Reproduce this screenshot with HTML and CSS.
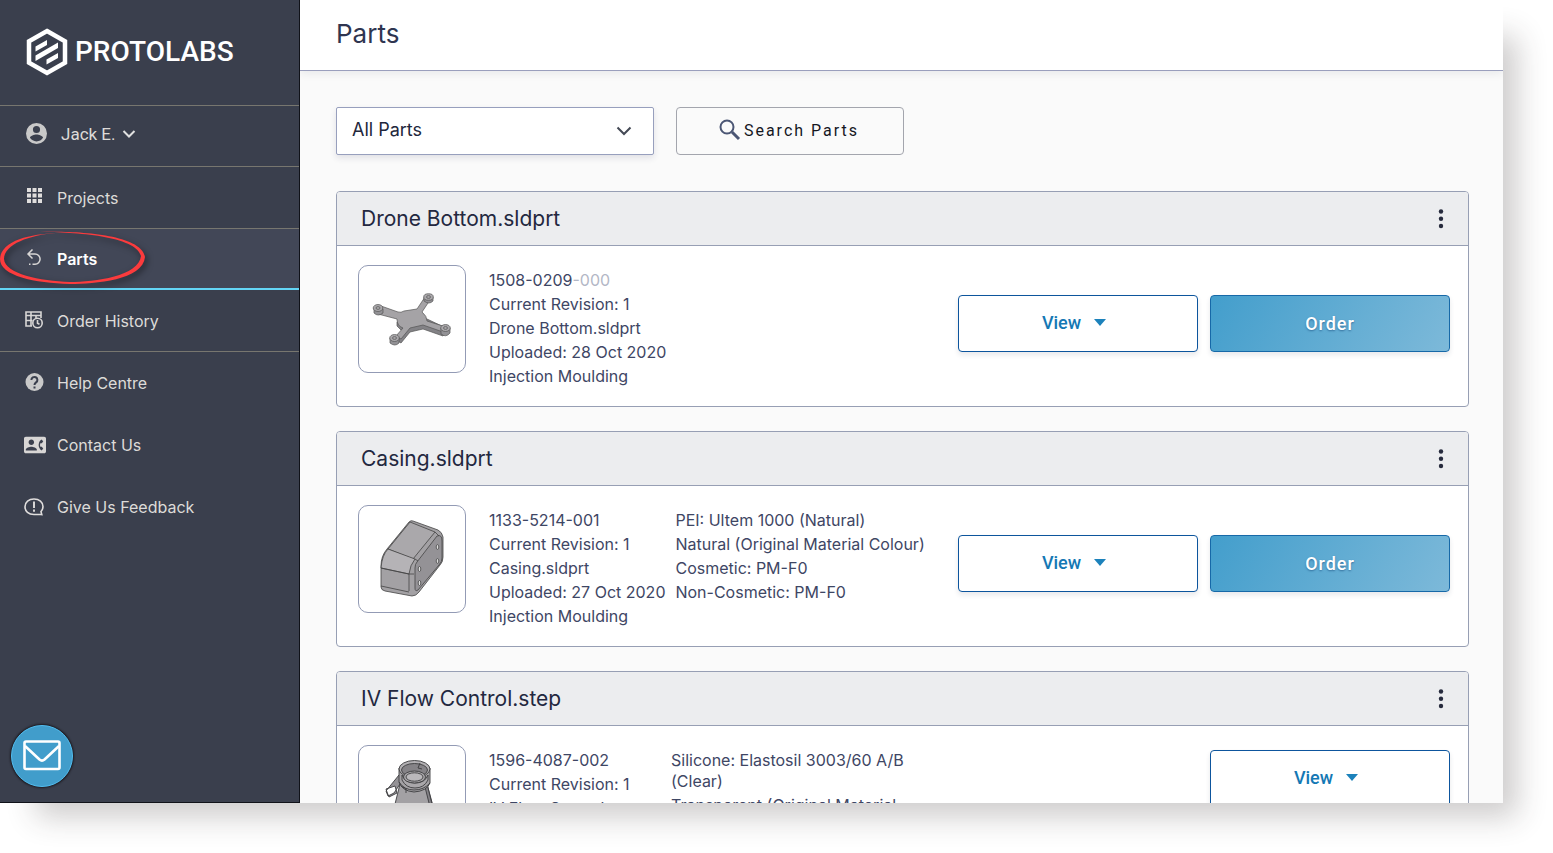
FILE: index.html
```html
<!DOCTYPE html>
<html lang="en">
<head>
<meta charset="utf-8">
<title>Parts</title>
<link rel="stylesheet" href="styles.css">
</head>
<body>
<div class="window">
  <nav class="sidebar">
    <a class="logo" href="#">
      <svg width="42" height="48" viewBox="0 0 42 48" fill="none"><path d="M21 3 39 13.200V34.800L21 45 3 34.800V13.200Z" stroke="#fff" stroke-width="4.500"/><path d="M9.500 18.500 21 12V17L9.500 23.500ZM9.500 27.500 32 14.500V20L9.500 33ZM20.500 31.500 32 25V30L20.500 36.500Z" fill="#fff"/></svg>
      <span>PROTOLABS</span>
    </a>
    <button class="user" type="button">
      <svg width="21" height="21" viewBox="2 2 20 20" fill="#c9c9c9"><path fill-rule="evenodd" d="M12 2a10 10 0 1 0 0 20 10 10 0 0 0 0-20Zm0 2.800a3.400 3.400 0 1 1 0 6.800 3.400 3.400 0 0 1 0-6.800Zm0 14.700c-2.600 0-4.900-1.300-6.200-3.400 0-2 4.100-3.200 6.200-3.200s6.200 1.200 6.200 3.200A7.400 7.400 0 0 1 12 19.500Z"/></svg>
      <span>Jack E.</span>
      <svg width="14" height="10" viewBox="0 0 14 10" fill="none" stroke="#e0e0e0" stroke-width="2"><path d="M1.500 2 7 7.500 12.500 2"/></svg>
    </button>
    <a class="item" href="#">
      <svg width="22" height="20" viewBox="1 2 22 20" fill="#e0dedd"><path d="M4 2h4v4H4zM9.500 2h4v4h-4zM15 2h4v4h-4zM4 7.500h4v4H4zM9.500 7.500h4v4h-4zM15 7.500h4v4h-4zM4 13h4v4H4zM9.500 13h4v4h-4zM15 13h4v4h-4z"/></svg>
      <span>Projects</span>
    </a>
    <a class="item active" href="#">
      <svg width="22" height="20" viewBox="1 1 22 20" fill="none" stroke="#d8d6d5" stroke-width="1.500"><path d="M9.500 1.500 5 6l4.500 4.500M5 6h7a5.100 5.100 0 0 1 0 10.200h-2.500"/><path d="M6 16.200h1.500"/></svg>
      <span>Parts</span>
    </a>
    <a class="item" href="#">
      <svg width="22" height="20" viewBox="1 1 22 20" fill="none" stroke="#d8d6d5" stroke-width="1.600"><path d="M9 16H3V2h15v6M3 5.500h15M3 10.500h6.500M8 2v14M13 5v3"/><circle cx="14.500" cy="13" r="4.700"/><path d="M14.500 10v3.300l2 1"/></svg>
      <span>Order History</span>
    </a>
    <a class="item plain" href="#">
      <svg width="22" height="20" viewBox="1 0 22 20"><circle cx="11.500" cy="9" r="9" fill="#c9c9c9"/><path d="M8.400 7a3 3 0 1 1 4.700 2.400c-1 .8-1.600 1.100-1.600 2.500M11.500 13.500v2" fill="none" stroke="#3a3f4d" stroke-width="2"/></svg>
      <span>Help Centre</span>
    </a>
    <a class="item plain" href="#">
      <svg width="22" height="20" viewBox="0 2 24 20" fill="#d8d6d5"><path d="M22 3H2C.9 3 0 3.900 0 5v14c0 1.100.9 2 2 2h20c1.100 0 2-.9 2-2V5c0-1.100-.9-2-2-2zM8 6c1.660 0 3 1.340 3 3s-1.340 3-3 3-3-1.340-3-3 1.340-3 3-3zm6 12H2v-1c0-2 4-3.100 6-3.100s6 1.100 6 3.100v1zm3.850-4h1.640L21 16l-1.990 1.990c-1.310-.98-2.280-2.380-2.730-3.990-.18-.64-.28-1.310-.28-2s.1-1.360.28-2c.45-1.620 1.420-3.010 2.730-3.990L21 8l-1.510 2h-1.640c-.22.63-.35 1.300-.35 2s.13 1.370.35 2z"/></svg>
      <span>Contact Us</span>
    </a>
    <a class="item plain" href="#">
      <svg width="22" height="20" viewBox="1 0 22 20" fill="none" stroke="#e0dedd" stroke-width="1.600"><path d="M17.500 17.500H11c-5.500 0-9-3.200-9-7.700C2 5.200 5.800 2 11 2s9 3 9 7.600c0 2-.8 3.600-2 5l.8 3Z"/><path d="M11 4.500v6.500M11 12.500v2.200" stroke-width="1.900"/></svg>
      <span>Give Us Feedback</span>
    </a>
    <svg class="marker" width="146" height="56" viewBox="0 0 146 56" fill="#fb3b3d"><path fill-rule="evenodd" d="M40 2C75 .5 142 4 145 27 143 50 95 54 70 54 35 53 0 46 0 29 1 10 32 4 56 3 30 5 4 14 4 29 5 44 40 51 70 52 95 52 139 46 141 26 136 6 75 2 40 2Z"/></svg>
    <button class="mail" type="button" aria-label="Send a message">
      <svg width="38" height="32" viewBox="0 0 38 32" fill="none" stroke="#fff" stroke-width="2.600" stroke-linejoin="round"><rect x="1.500" y="1.500" width="35" height="27.500" rx="1.500"/><path d="M2 6 16.500 19.500c1.600 1.400 3.400 1.400 5 0L36 6"/></svg>
    </button>
  </nav>
  <main class="main">
    <header class="top"><h1>Parts</h1></header>
    <div class="content">
      <div class="filters">
        <label class="picker">
          <select aria-label="Filter parts"><option>All Parts</option></select>
          <svg width="16" height="10" viewBox="0 0 16 10" fill="none" stroke="#444955" stroke-width="2"><path d="M1.500 1.500 8 8l6.500-6.500"/></svg>
        </label>
        <button class="search" type="button">
          <svg width="22" height="22" viewBox="0 0 22 22" fill="none" stroke="#4b5674"><circle cx="8" cy="8" r="6.500" stroke-width="2"/><path d="m13 13 7 7" stroke-width="3"/></svg>
          <span>Search Parts</span>
        </button>
      </div>

      <section class="card">
        <header class="card-head">
          <h2>Drone Bottom.sldprt</h2>
          <button class="more" type="button" aria-label="More options"><svg width="6" height="20" viewBox="0 0 6 20" fill="#262b3d"><circle cx="3" cy="2.500" r="2.200"/><circle cx="3" cy="9.700" r="2.200"/><circle cx="3" cy="17" r="2.200"/></svg></button>
        </header>
        <div class="card-body">
          <div class="thumb">
            <svg width="106" height="106" viewBox="0 0 106 106" stroke="#555" stroke-width=".7" stroke-linejoin="round">
              <path fill="#838286" d="M38 56v4l6 6-7 8 5 3 9-11 13-3 20 7 3-4v-4L68 53Z"/>
              <path fill="#a5a3a6" d="m22 40 17 6q3 1 6-1l13-2 8-12 5 3-8 12q5 4 5 9l19 6-3 5-20-7-13 3-9 11-5-3 7-8q-6-2-6-9l-19-5Z"/>
              <path fill="#929195" d="M15 42v5q4 4 9 0v-4ZM65 31v4q5 4 9 0v-4ZM82 62v6q5 4 9-1v-5ZM31 72v5q5 4 9 0v-5Z"/>
              <g fill="#aaa8ab"><ellipse cx="19" cy="42" rx="4.800" ry="3.500"/><ellipse cx="69.500" cy="31" rx="4.800" ry="3.300"/><ellipse cx="86.500" cy="62" rx="4.800" ry="3.500"/><ellipse cx="35.500" cy="72" rx="4.800" ry="3.500"/></g>
              <g fill="none"><ellipse cx="19" cy="42" rx="2" ry="1.400"/><ellipse cx="69.500" cy="31" rx="2" ry="1.400"/><ellipse cx="86.500" cy="62" rx="2" ry="1.400"/><ellipse cx="35.500" cy="72" rx="2" ry="1.400"/></g>
            </svg>
          </div>
          <ul class="info">
            <li>1508-0209<span class="faded">-000</span></li>
            <li>Current Revision: 1</li>
            <li>Drone Bottom.sldprt</li>
            <li>Uploaded: 28 Oct 2020</li>
            <li>Injection Moulding</li>
          </ul>
          <div class="actions">
            <button class="btn view" type="button">View <svg width="12" height="7" viewBox="0 0 12 7"><path d="M0 0h12L6 7Z" fill="#1c82bb"/></svg></button>
            <button class="btn order" type="button">Order</button>
          </div>
        </div>
      </section>

      <section class="card">
        <header class="card-head">
          <h2>Casing.sldprt</h2>
          <button class="more" type="button" aria-label="More options"><svg width="6" height="20" viewBox="0 0 6 20" fill="#262b3d"><circle cx="3" cy="2.500" r="2.200"/><circle cx="3" cy="9.700" r="2.200"/><circle cx="3" cy="17" r="2.200"/></svg></button>
        </header>
        <div class="card-body">
          <div class="thumb">
            <svg width="106" height="106" viewBox="0 0 106 106" stroke="#444" stroke-width=".8" stroke-linejoin="round">
              <path fill="#a3a1a4" d="M50 16q2-2 4-1l25 9q4 2 5 7v20q0 5-3 8L60 86q-3 4-7 4l-27-5q-4-1-4-4V60q0-10 6-17Z"/>
              <path fill="#aaa8ab" d="M29 43 51 16l25 10-22 27Z"/>
              <path fill="#b5b3b6" d="M29 43q-6 6-7 19l28 6q1-9 6-15Z"/>
              <path fill="#949296" d="M58 56 78 30q5-2 5 5v17q0 4-3 7L59 84q-3 2-3-2V62q0-4 2-6Z"/>
              <path fill="none" d="m22 62 28 6v17M22 80l28 6M50 68h5M56 53l3 2M76 26l4 4"/>
              <g fill="#ddd"><ellipse cx="60.500" cy="63" rx="1.300" ry="2.500"/><ellipse cx="60.500" cy="77" rx="1.300" ry="2.500"/><ellipse cx="78.500" cy="41" rx="1.300" ry="2.300"/><ellipse cx="78.500" cy="55" rx="1.300" ry="2.300"/></g>
            </svg>
          </div>
          <ul class="info">
            <li>1133-5214-001</li>
            <li>Current Revision: 1</li>
            <li>Casing.sldprt</li>
            <li>Uploaded: 27 Oct 2020</li>
            <li>Injection Moulding</li>
          </ul>
          <ul class="info">
            <li>PEI: Ultem 1000 (Natural)</li>
            <li>Natural (Original Material Colour)</li>
            <li>Cosmetic: PM-F0</li>
            <li>Non-Cosmetic: PM-F0</li>
          </ul>
          <div class="actions">
            <button class="btn view" type="button">View <svg width="12" height="7" viewBox="0 0 12 7"><path d="M0 0h12L6 7Z" fill="#1c82bb"/></svg></button>
            <button class="btn order" type="button">Order</button>
          </div>
        </div>
      </section>

      <section class="card">
        <header class="card-head">
          <h2>IV Flow Control.step</h2>
          <button class="more" type="button" aria-label="More options"><svg width="6" height="20" viewBox="0 0 6 20" fill="#262b3d"><circle cx="3" cy="2.500" r="2.200"/><circle cx="3" cy="9.700" r="2.200"/><circle cx="3" cy="17" r="2.200"/></svg></button>
        </header>
        <div class="card-body tall">
          <div class="thumb">
            <svg width="106" height="106" viewBox="0 0 106 106" stroke="#3c3c3e" stroke-width=".9" stroke-linejoin="round">
              <path fill="#949296" d="m40 29-13 16 2 5 6-3 8-12ZM27 43l9-3 2 7-8 4-2-5Z"/>
              <path fill="#a3a1a4" d="M41 38 36 58v30q18 10 38 0V60L68 38Z"/>
              <path fill="#858387" d="m68 38 5 20 2 4-4-1-5-20Z"/>
              <path fill="#a3a1a4" d="M40 22v14q3 9 15 10 13-1 16-9V22Z"/>
              <ellipse cx="55.500" cy="23" rx="15.500" ry="8.500" fill="#b3b1b4"/>
              <ellipse cx="55.500" cy="24" rx="13" ry="6.500" fill="#858387"/>
              <path fill="#a9a7aa" d="M43 29q3 8 13 8t13-8v5q-4 8-13 8t-13-8Z"/>
              <ellipse cx="55.500" cy="31" rx="11" ry="6" fill="#aaa8ab"/>
              <ellipse cx="55.500" cy="31" rx="8.500" ry="4.200" fill="#bab8bb"/>
              <path fill="none" d="M40 36q5 8 15 8t16-7M61 17l-2 5 4 1M42 40l5 3v4"/>
            </svg>
          </div>
          <ul class="info">
            <li>1596-4087-002</li>
            <li>Current Revision: 1</li>
            <li>IV Flow Control.step</li>
          </ul>
          <ul class="info wrapping">
            <li>Silicone: Elastosil 3003/60 A/B (Clear)</li>
            <li>Transparent (Original Material Colour)</li>
          </ul>
          <div class="actions stacked">
            <button class="btn view" type="button">View <svg width="12" height="7" viewBox="0 0 12 7"><path d="M0 0h12L6 7Z" fill="#1c82bb"/></svg></button>
            <button class="btn order" type="button">Order</button>
          </div>
        </div>
      </section>
    </div>
  </main>
</div>
</body>
</html>
```
FILE: styles.css
```css
* { box-sizing: border-box; }
body {
  margin: 0;
  height: 100vh;
  padding: 0 50px 50px 0;
  overflow: hidden;
  background: #fff;
  font-family: Inter, "Liberation Sans", sans-serif;
  font-size: 16px;
  color: #3e4664;
}
button, select { font: inherit; color: inherit; cursor: pointer; }
a { color: inherit; text-decoration: none; }
h1, h2, ul { margin: 0; padding: 0; font-weight: 400; }
svg { flex: none; display: block; }

.window {
  display: flex;
  height: 100%;
  box-shadow: 25px 25px 28px -11px rgba(50, 40, 40, 0.24);
}

/* Sidebar */
.sidebar {
  position: relative;
  flex: none;
  width: 300px;
  overflow: hidden;
  background: #3a3f4d;
  border-right: 1px solid #101219;
  border-bottom: 1px solid #101219;
  color: #dddbd8;
}
.logo {
  display: flex;
  align-items: center;
  gap: 7px;
  height: 106px;
  padding: 0 26px 2px;
  border-bottom: 1px solid #77766f;
  color: #fff;
  font-family: Roboto, sans-serif;
  font-size: 28px;
  font-weight: 500;
}
.user {
  display: flex;
  align-items: center;
  width: 100%;
  height: 61px;
  padding: 0 26px 5px;
  border: 0;
  border-bottom: 1px solid #77766f;
  background: none;
  font-family: Roboto, sans-serif;
  font-size: 17px;
}
.user span { margin: 0 6px 0 14px; }
.item {
  display: flex;
  align-items: center;
  gap: 11px;
  height: 62px;
  padding: 0 24px;
  border-bottom: 1px solid #77766f;
}
.item.active {
  height: 61px;
  background: #424757;
  border-bottom: 2px solid #63d5f5;
  color: #fff;
  font-weight: 600;
}
.item.plain { border-bottom-color: transparent; }
.marker {
  position: absolute;
  top: 230px;
  left: 0;
  filter: drop-shadow(2px 3px 3px rgba(0, 0, 0, 0.5));
  pointer-events: none;
}
.mail {
  position: absolute;
  left: 11px;
  bottom: 15px;
  display: flex;
  align-items: center;
  justify-content: center;
  width: 62px;
  height: 62px;
  padding: 0;
  border: 1px solid #52bdf0;
  border-radius: 50%;
  background: #419dcb;
  box-shadow: 0 0 2px 1px #1c1a20;
}

/* Main column */
.main {
  flex: 1;
  min-width: 0;
  overflow: hidden;
  background: #fafafa;
}
.top {
  display: flex;
  align-items: center;
  height: 71px;
  padding: 0 36px 4px;
  background: #fff;
  border-bottom: 1px solid #9a9fbd;
  box-shadow: 0 3px 8px rgba(40, 45, 80, 0.08);
}
h1 { font-size: 26px; color: #2f3550; }
.content {
  display: flex;
  flex-direction: column;
  gap: 24px;
  padding: 36px 34px 0 36px;
}
.filters { display: flex; gap: 22px; margin-bottom: 12px; }
.picker {
  display: grid;
  align-items: center;
  width: 318px;
  height: 48px;
}
.picker select {
  grid-area: 1 / 1;
  width: 100%;
  height: 100%;
  padding: 0 15px 3px;
  appearance: none;
  border: 1px solid #979fbd;
  border-radius: 2px;
  background: #fff;
  box-shadow: 0 3px 6px rgba(40, 45, 80, 0.12);
  font-size: 18px;
  color: #22273c;
}
.picker svg {
  grid-area: 1 / 1;
  justify-self: end;
  margin-right: 22px;
  pointer-events: none;
}
.search {
  display: flex;
  align-items: center;
  justify-content: center;
  gap: 3px;
  width: 228px;
  height: 48px;
  padding: 0 12px 2px 10px;
  border: 1px solid #a3a5ad;
  border-radius: 4px;
  background: #fafafa;
  color: #15171f;
  font-family: Roboto, sans-serif;
  font-size: 16px;
  letter-spacing: 2px;
}

/* Part cards */
.card {
  border: 1px solid #979fb4;
  border-radius: 4px;
  background: #fff;
}
.card-head {
  display: flex;
  align-items: center;
  justify-content: space-between;
  height: 54px;
  padding: 0 24px;
  border-bottom: 1px solid #979fb4;
  border-radius: 3px 3px 0 0;
  background: #ecedef;
}
h2 { font-size: 21px; color: #23283f; }
.more { padding: 0; border: 0; background: none; }
.card-body {
  display: flex;
  min-height: 160px;
  padding: 19px 18px 19px 21px;
}
.thumb {
  flex: none;
  width: 108px;
  height: 108px;
  margin-right: 23px;
  border: 1px solid #939bb5;
  border-radius: 10px;
}
.info {
  display: flex;
  flex-direction: column;
  gap: 3px;
  min-width: 172px;
  margin-top: 5px;
  margin-right: 10px;
  list-style: none;
  line-height: 21px;
  white-space: nowrap;
}
.wrapping { flex: 0 1 250px; white-space: normal; }
.faded { color: #b3b7c6; }
.actions {
  display: flex;
  align-items: center;
  gap: 12px;
  margin-left: auto;
  padding-bottom: 5px;
}
.tall { min-height: 179px; }
.stacked { flex-direction: column; justify-content: center; }
.btn {
  display: flex;
  align-items: center;
  justify-content: center;
  width: 240px;
  height: 57px;
  border: 1px solid #0d559d;
  border-radius: 4px;
  box-shadow: 0 3px 5px rgba(30, 40, 70, 0.1);
  font-family: Roboto, sans-serif;
  font-size: 18px;
  font-weight: 500;
}
.view { gap: 13px; padding: 0 14px 2px 6px; background: #fff; color: #1478b4; }
.order {
  background: linear-gradient(120deg, #439ecc, #7db9d9);
  border-color: #1769a8;
  color: #fff;
  letter-spacing: 1px;
  text-shadow: 0 1px 2px rgba(20, 70, 120, 0.6);
}
```
